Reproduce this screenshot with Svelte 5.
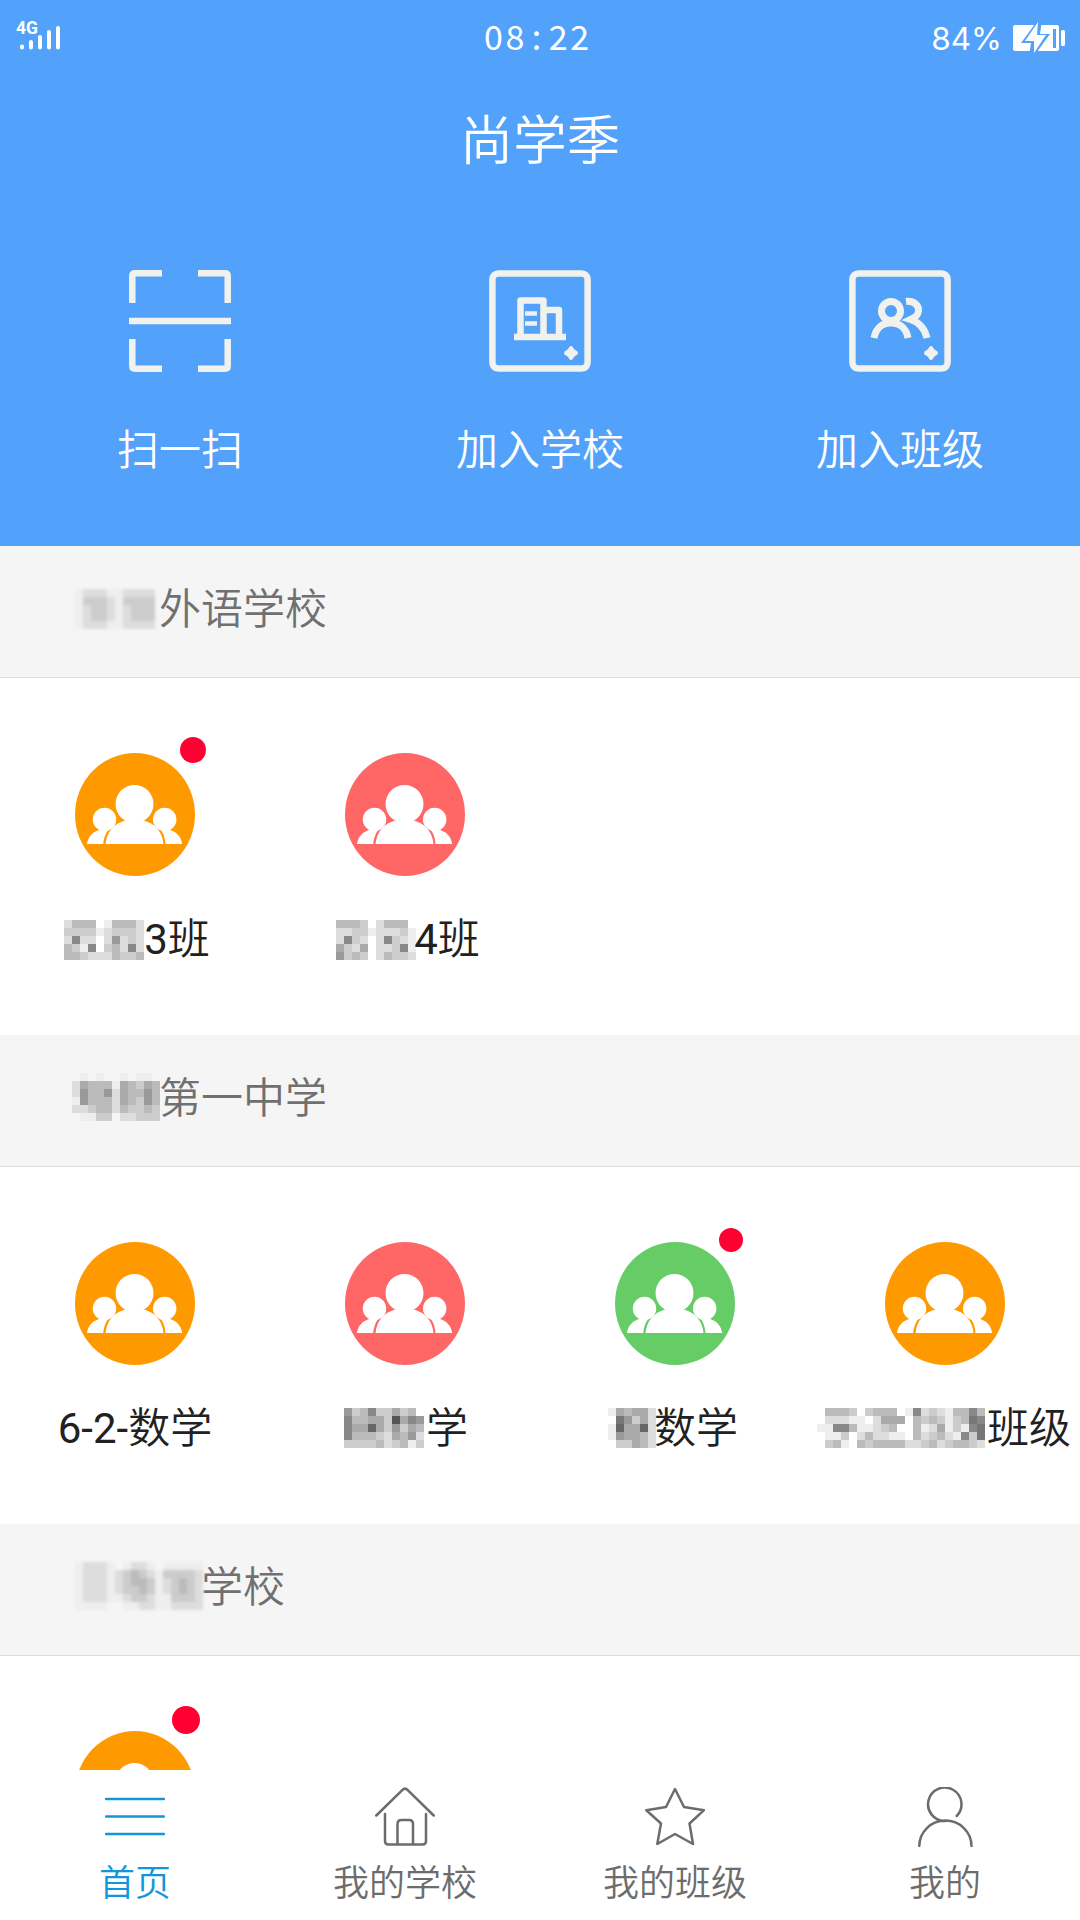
<script>
  // Each mosaic row is a string of grey levels (hex digit tripled), 8px cells.
  const sections = [
    {
      title: '外语学校', hidden: 2, soft: true,
      mosaic: { x: 0, y: 4, rows: ['edddeedddd', 'ecccdecccc', 'edccdedccc', 'edccdedccc', 'edddeedddd'] },
      classes: [
        { color: '#ff9900', hidden: 2, latin: '3', name: '班', badge: 'm', mosaic: { x: 4, y: 6, rows: ['dbbbfebbbd', 'ccccedcccd', 'd8ddfd9dcd', 'bce8fcbd8d', 'bbcdddbccb'] } },
        { color: '#ff6666', hidden: 2, latin: '4', name: '班', badge: '', mosaic: { x: 6, y: 6, rows: ['bbbcfdbbbf', 'ddccedddce', 'd8cdfd8cde', 'acdafddc8e', '9cbcfdbccd'] } }
      ]
    },
    {
      title: '第一中学', hidden: 2, soft: false,
      mosaic: { x: -3, y: -1, rows: ['.e.e..e.ee.', 'dabbbeabcab', 'd9bb9dabb9b', 'e9bbbdabc9b', 'ddcbbdbccbc', '.eecc.ddccc'] },
      classes: [
        { color: '#ff9900', hidden: 0, latin: '6-2-', name: '数学', badge: '', mosaic: null },
        { color: '#ff6666', hidden: 2, name: '学', badge: '', mosaic: { x: 2, y: 5, rows: ['9cb8ccacbf', '8bbaac5a89', '8aa6ac9cab', '8bbbcdab9d', 'ccccbdcbec'] } },
        { color: '#66cc66', hidden: 1, name: '数学', badge: 's', mosaic: { x: -4, y: 5, rows: ['eabaad', 'f79cad', 'e6aa6d', 'e9aabd', '.ccabd'] } },
        { color: '#ff9900', hidden: 4, name: '班级', badge: '', mosaic: { x: -2, y: 5, rows: ['.bbbcfcbbb.e8dcdebb8b', 'fdddeefdaaafbcbcecb78', 'ee88beedcb.fbedaece87', '.eec.dbddeefbdcbde8c7', '.cbe.bcbbbbddcbdcbbcd'] } }
      ]
    },
    {
      title: '学校', hidden: 3, soft: true,
      mosaic: { x: 0, y: -1, rows: ['eddde.edde.eeeee', 'edddedcbcdeccccd', 'edddedcbbcedcbcd', 'edddedccbcedcbcd', 'edddeedccdeecccd', 'eeee..eeddeedddd'] },
      classes: [{ color: '#ff9900', hidden: 0, name: '', badge: 'l', mosaic: null }]
    }
  ];
  const actions = [
    { label: '扫一扫', icon: 'scan' },
    { label: '加入学校', icon: 'school' },
    { label: '加入班级', icon: 'class' }
  ];
  const tabs = [
    { label: '首页', icon: 'menu' },
    { label: '我的学校', icon: 'house' },
    { label: '我的班级', icon: 'star' },
    { label: '我的', icon: 'person' }
  ];
</script>

{#snippet masked(item)}
  {#if item.hidden}
    <svg class="mask" class:soft={item.soft} width={item.hidden * 42} height="42">
      {#if item.mosaic}
        {#each item.mosaic.rows as row, r}
          {#each row.split('') as c, i}
            {#if c !== '.'}
              <rect x={item.mosaic.x + i * 8} y={item.mosaic.y + r * 8} width="8" height="8" fill={'#' + c + c + c} />
            {/if}
          {/each}
        {/each}
      {/if}
    </svg>
  {/if}
{/snippet}

<div class="screen">
  <header>
    <div class="status">
      <div class="signal">
        <span class="net">4G</span>
        <svg width="46" height="32" viewBox="0 0 46 32">
          <path d="M6 25.500v1M15 21v5.500M24 16v10.500M33 11v15.500M42 7v19.500" stroke="#fff" stroke-width="4" stroke-linecap="round" />
        </svg>
      </div>
      <div class="clock">
        {#each '08:22'.split('') as ch}<span>{ch}</span>{/each}
      </div>
      <div class="power">
        <span>84%</span>
        <svg width="53" height="34" viewBox="0 0 53 34">
          <rect x="0" y="4" width="46" height="26" rx="2" fill="#fff" />
          <path d="M41.500 8v19" stroke="#52a1fa" stroke-width="3" />
          <rect x="48" y="9" width="4" height="16" rx="1.500" fill="#fff" />
          <path d="M25 -1L8 22h10l-2 13h5L37 13H27l2-14z" fill="#52a1fa" />
          <path d="M25 1L12 20h9l0 12L33 14H24z" fill="#fff" />
        </svg>
      </div>
    </div>
    <h1>尚学季</h1>
    <div class="actions">
      {#each actions as a}
        <div class="action">
          <svg width="102" height="102" viewBox="0 0 102 102" fill="none" stroke="#f1f2ee" stroke-width="6.500">
            {#if a.icon === 'scan'}
              <path d="M3.300 33V6q0-2.700 2.700-2.700H33M69 3.300h27q2.700 0 2.700 2.700v27M3.300 69v27q0 2.700 2.700 2.700H33M69 98.700h27q2.700 0 2.700-2.700V69M0 51h102" />
            {:else}
              <rect x="3.400" y="3.400" width="95.200" height="95.200" rx="6" />
              <path d="M82 78l2 3 3 2-3 2-2 3-2-3-3-2 3-2z" fill="#f1f2ee" stroke-width="4" stroke-linejoin="round" />
              {#if a.icon === 'school'}
                <path d="M25 67h52M31.500 67V30.500h23V67M54.500 40h15.500v27" stroke-width="6.500" stroke-linejoin="round" />
                <path d="M36 43.500h12M36 53.500h12" stroke-width="4.500" />
              {:else}
                <path d="M25 68c2-11 9-15 17-15s15 4 17 15M57 31.500c8-1 13 4 12.500 9.500-.5 4.500-3 6-8 8.500 8 2.500 14 8 16.500 18.500" stroke-width="7" />
                <circle cx="42" cy="41" r="9.500" stroke-width="7" />
              {/if}
            {/if}
          </svg>
          <span>{a.label}</span>
        </div>
      {/each}
    </div>
  </header>

  <main>
    {#each sections as s}
      <section>
        <h2>{@render masked(s)}{s.title}</h2>
        <div class="grid">
          {#each s.classes as c}
            <div class="class">
              <div class="avatar">
                <svg width="120" height="123" viewBox="0 0 120 123" fill="#fff">
                  <ellipse cx="60" cy="61.500" rx="60" ry="61.500" fill={c.color} />
                  <circle cx="29.500" cy="66.500" r="11.700" />
                  <circle cx="89.700" cy="66.500" r="11.700" />
                  <path d="M12 91C13 84 17.500 78.500 25.500 76.500L34 70l7-3-.5 3C33 75 29 82 28.200 91z" />
                  <path d="M107.200 91C106.200 84 101.700 78.500 93.700 76.500L85.200 70l-7-3 .5 3C86.200 75 90 82 90.500 91z" />
                  <circle cx="59.500" cy="51" r="19" />
                  <path d="M30.500 91C31.500 79 39 70.500 50 67.500h19C80 70.500 87.500 79 88.500 91z" />
                </svg>
                {#if c.badge}<i class="badge {c.badge}"></i>{/if}
              </div>
              {#if c.name}
                <div class="name">{@render masked(c)}{#if c.latin}<span class="latin">{c.latin}</span>{/if}{c.name}</div>
              {/if}
            </div>
          {/each}
        </div>
      </section>
    {/each}
  </main>

  <nav>
    {#each tabs as t, i}
      <div class="tab" class:active={i === 0}>
        <svg width="60" height="60" viewBox="0 0 60 60" fill="none" stroke="currentColor" stroke-width="2.500" stroke-linecap="round" stroke-linejoin="round">
          {#if t.icon === 'menu'}
            <path d="M1 12h58M1 29.500h58M1 47h58" />
          {:else if t.icon === 'house'}
            <path d="M1.300 28.500L27.500 2.800q2.500-2.500 5 0L58.700 28.500M10 27v27q0 3.500 3.500 3.500h34q3.500 0 3.500-3.500V27M22.500 57V37q0-4 4-4h7.500q4 0 4 4v20" />
          {:else if t.icon === 'star'}
            <path d="M30 2L39 20 59 23.200 44.500 36.500 48 57 30 47 12.300 57 16 36.500 1.300 23.200 21 20z" />
          {:else}
            <path d="M41.700 29A16.700 16.700 0 1 0 30 34M4.300 59a26 25.300 0 0 1 52.200 0" />
          {/if}
        </svg>
        <span>{t.label}</span>
      </div>
    {/each}
  </nav>
</div>

<style>
  :global(body) { margin: 0; background: #fff; }
  .screen {
    width: 1080px;
    height: 1920px;
    display: flex;
    flex-direction: column;
    overflow: hidden;
    background: #fff;
    font-family: Roboto, 'Noto Sans CJK SC', sans-serif;
    font-weight: 350;
  }
  header {
    flex: none;
    height: 546px;
    background: #52a1fa;
    color: #fff;
  }
  .status {
    height: 72px;
    display: grid;
    grid-template-columns: 1fr auto 1fr;
    align-items: center;
    padding: 0 14px 0 16px;
    box-sizing: border-box;
  }
  .signal { display: grid; margin-top: 2px; }
  .signal > * { grid-area: 1 / 1; }
  .net { font: 700 17.500px/20px Roboto, sans-serif; margin-top: -3px; }
  .clock {
    display: flex;
    margin-right: 9px;
    font: 400 34px/68px 'Noto Sans CJK SC', sans-serif;
  }
  .clock span { width: 21.600px; text-align: center; }
  .power {
    display: flex;
    justify-content: flex-end;
    align-items: center;
    gap: 11px;
    margin-top: 4px;
    font: 400 31.500px/40px Inter, sans-serif;
  }
  .power span { padding-top: 2px; }
  h1 {
    margin: 32px 0 0;
    height: 76px;
    font-size: 53.500px;
    line-height: 76px;
    font-weight: 350;
    text-align: center;
  }
  .actions {
    display: grid;
    grid-template-columns: repeat(3, 1fr);
    padding-top: 90px;
  }
  .action {
    display: flex;
    flex-direction: column;
    align-items: center;
    gap: 49px;
    font-size: 42px;
    line-height: 60px;
  }
  main { flex: 1; min-height: 0; overflow: hidden; }
  section { height: 489px; }
  h2 {
    display: flex;
    align-items: center;
    margin: 0;
    height: 132px;
    box-sizing: border-box;
    padding: 0 75px 12px;
    border-bottom: 1px solid #dcdcdc;
    background: #f5f5f5;
    color: #707070;
    font-size: 42px;
    font-weight: 350;
  }
  .mask { flex: none; overflow: visible; }
  .soft { filter: blur(1.5px); }
  .grid {
    display: grid;
    grid-template-columns: repeat(4, 270px);
    padding-top: 75px;
  }
  .class { display: flex; flex-direction: column; align-items: center; }
  .avatar { position: relative; height: 123px; }
  .badge {
    position: absolute;
    border-radius: 50%;
    background: #ff0033;
  }
  .m { width: 26px; height: 26px; left: 105px; top: -16px; }
  .s { width: 24px; height: 24px; left: 104px; top: -14px; }
  .l { width: 28px; height: 28px; left: 97px; top: -25px; }
  .name {
    display: flex;
    align-items: center;
    margin-top: 29px;
    height: 60px;
    font-size: 42px;
    white-space: nowrap;
    color: #212121;
  }
  /* Latin baseline sits level with the taller CJK line box */
  .latin { font-weight: 400; padding-top: 8px; }
  nav {
    flex: none;
    height: 150px;
    display: grid;
    grid-template-columns: repeat(4, 1fr);
    background: #fff;
    color: #6c6c6c;
  }
  .tab {
    display: flex;
    flex-direction: column;
    align-items: center;
    padding-top: 17px;
    gap: 12px;
    font-size: 36px;
    line-height: 50px;
  }
  .active { color: #1296db; }
</style>
